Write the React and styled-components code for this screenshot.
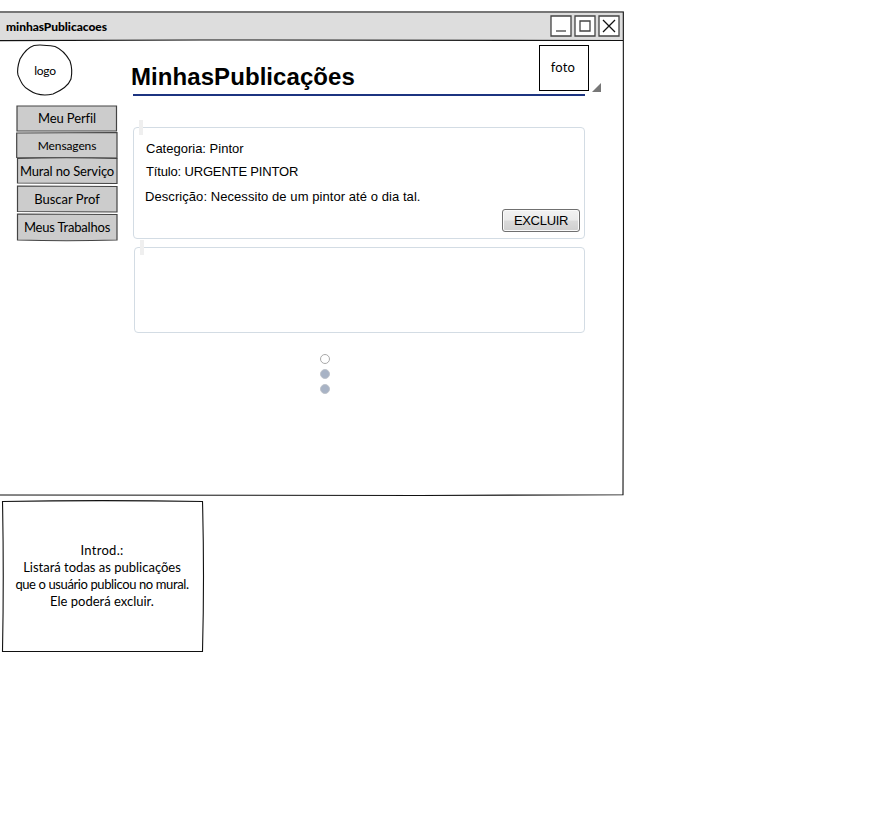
import React from "react";
import styled, { createGlobalStyle } from "styled-components";

const Global = createGlobalStyle`
  * { box-sizing: border-box; }
  body { margin: 0; background: #fff; color: #000; }
`;

const hand = `"Lato", "Open Sans", sans-serif`;
const plain = `"Liberation Sans", Arial, sans-serif`;

const Page = styled.div`
  width: 895px;
  height: 839px;
  padding-top: 11px;
  overflow: hidden;
`;

const Window = styled.main`
  position: relative;
  width: 624px;
  height: 485px;
`;

const Outline = styled.svg`
  position: absolute;
  inset: 0;
  width: 100%;
  height: 100%;
  overflow: visible;
  fill: none;
  stroke: ${(p) => p.$stroke || "#111"};
  stroke-width: ${(p) => p.$weight || 1.1};
  pointer-events: none;
`;

const TitleBar = styled.header`
  display: flex;
  align-items: center;
  justify-content: space-between;
  height: 29px;
  padding: 1px 4px 0 6px;
  background: #ddd;
`;

const Hand = styled.span`
  position: relative;
  display: block;
  font-family: ${hand};
  font-size: ${(p) => p.$size || 13}px;
  font-weight: ${(p) => (p.$bold ? 900 : 400)};
  font-variant-ligatures: none;
  line-height: 17px;
  letter-spacing: ${(p) => p.$track || 0}px;
  white-space: nowrap;
`;

const WindowButtons = styled.div`
  display: flex;
  gap: 2px;
`;

const WindowButton = styled.svg`
  display: block;
  width: 22px;
  height: 22px;
  fill: #fff;
  stroke: #444;
  stroke-width: 1.3;
`;

const Body = styled.div`
  display: grid;
  grid-template-columns: 133px 452px;
  height: 456px;
`;

const Side = styled.aside`
  padding: 4px 0 0 16px;
`;

const Logo = styled.div`
  position: relative;
  display: flex;
  align-items: center;
  justify-content: center;
  width: 56px;
  height: 52px;
  padding: 1px 0 0 2px;
`;

const Menu = styled.nav`
  display: flex;
  flex-direction: column;
  width: 102px;
  padding-top: 9px;
`;

const MenuItem = styled.a`
  position: relative;
  display: flex;
  align-items: center;
  justify-content: center;
  width: 102px;
  height: ${(p) => p.$height}px;
  padding-top: ${(p) => p.$drop || 0}px;
`;

const Main = styled.section`
  display: flex;
  flex-direction: column;
`;

const Heading = styled.div`
  display: flex;
  justify-content: space-between;
  height: 56px;
  padding-top: 5px;
  border-bottom: 2px solid #1c3481;
`;

const Title = styled.h1`
  margin: 18px 0 0 -2px;
  font: bold 24px/28px ${plain};
  letter-spacing: 0.07px;
`;

const Photo = styled.div`
  position: relative;
  display: flex;
  align-items: center;
  justify-content: center;
  width: 50px;
  height: 46px;
  margin-right: -4px;
  padding: 0 2px 1px 0;
  border: 1px solid #000;
`;

const Corner = styled.svg`
  position: absolute;
  left: 52px;
  top: 37px;
  width: 9px;
  height: 9px;
  fill: #777;
`;

const Card = styled.article`
  position: relative;
  height: ${(p) => p.$height}px;
  margin: ${(p) => p.$margin};
  padding: 12px 4px 0 12px;
  border: 1px solid #d3dce4;
  border-radius: 4px;
  font: 13px/18px ${plain};
  &::before {
    content: "";
    position: absolute;
    left: 5px;
    top: -8px;
    width: 4px;
    height: 15px;
    background: #efefef;
  }
`;

const Line = styled.p`
  margin: ${(p) => p.$margin};
  letter-spacing: ${(p) => p.$track || 0}px;
`;

const Delete = styled.button`
  display: block;
  width: 78px;
  height: 23px;
  margin: 3px 0 0 auto;
  padding: 1px 0 0;
  border: 1px solid #707070;
  border-radius: 3px;
  box-shadow: inset 0 0 0 1px #fafafa;
  background: linear-gradient(#f2f2f2 0, #ebebeb 48%, #dadada 52%, #cfcfcf 100%);
  color: #000;
  font: 13px/18px ${plain};
  letter-spacing: -0.3px;
`;

const Dots = styled.div`
  display: flex;
  flex-direction: column;
  gap: 5px;
  margin: 21px 0 0 187px;
`;

const Dot = styled.i`
  width: 10px;
  height: 10px;
  border: 1px solid ${(p) => (p.$empty ? "#aaa" : "#bfc4cb")};
  border-radius: 50%;
  background: ${(p) => (p.$empty ? "#fff" : "#a8b3c5")};
`;

const Note = styled.aside`
  position: relative;
  display: flex;
  flex-direction: column;
  align-items: center;
  width: 202px;
  height: 152px;
  margin: 4px 0 0 2px;
  padding: 42px 2px 0 0;
`;

const menu = [
  { label: "Meu Perfil", height: 27, track: -0.1, d: "M1 1 L100.500 1 L100.500 26 L1 26 Z" },
  { label: "Mensagens", height: 26, drop: 1, size: 12, track: -0.1, d: "M.7 1 L101 .5 L101 26 L.7 25.500 Z" },
  { label: "Mural no Serviço", height: 27, track: -0.15, d: "M1.500 .5 Q50 -1 101 .5 L101 25.500 L1.500 25 Z" },
  { label: "Buscar Prof", height: 28, d: "M1.500 1 L101 1.500 L101 27 L1.500 26.500 Z" },
  { label: "Meus Trabalhos", height: 28, track: -0.2, d: "M1.500 1 L101 1.500 L101 27 Q50 28.500 1.500 27 Z" },
];

export default function App() {
  return (
    <Page>
      <Global />
      <Window>
        <TitleBar>
          <Hand $bold $size={12} $track={-0.05}>minhasPublicacoes</Hand>
          <WindowButtons>
            <WindowButton viewBox="0 0 22 22"><path d="M1 1H21V21H1Z" /><path d="M6 16H16" /></WindowButton>
            <WindowButton viewBox="0 0 22 22"><path d="M1 1H21V21H1Z" /><path d="M6 6H16V16H6Z" /></WindowButton>
            <WindowButton viewBox="0 0 22 22"><path d="M1 1H21V21H1Z" /><path stroke="#111" d="M5 5L17 17M17 5L5 17" /></WindowButton>
          </WindowButtons>
        </TitleBar>
        <Body>
          <Side>
            <Logo>
              <Outline viewBox="0 0 56 52">
                <path d="M18 1.500C24 .2 33 1.500 39 2.500C45 5 50 10 54 17C56 23 56 30 55 35C52 43 44 47 37 50C28 52 20 51 13 46C7 43 5 38 2 31C1 27 2 21 4 15C8 8 13 3 18 1.500Z" />
              </Outline>
              <Hand $size={12} $track={-0.3}>logo</Hand>
            </Logo>
            <Menu>
              {menu.map((m) => (
                <MenuItem key={m.label} $height={m.height} $drop={m.drop}>
                  <Outline $stroke="#444" $weight={1.2}><path fill="#ccc" d={m.d} /></Outline>
                  <Hand $size={m.size} $track={m.track}>{m.label}</Hand>
                </MenuItem>
              ))}
            </Menu>
          </Side>
          <Main>
            <Heading>
              <Title>MinhasPublicações</Title>
              <Photo>
                <Hand $track={0.2}>foto</Hand>
                <Corner viewBox="0 0 9 9"><path d="M9 0V9H0Z" /></Corner>
              </Photo>
            </Heading>
            <Card $height={112} $margin="31px 0 0 0">
              <Line $margin="0">Categoria: Pintor</Line>
              <Line $margin="5px 0 0" $track={-0.16}>Título: URGENTE PINTOR</Line>
              <Line $margin="7px 0 0 -1px" $track={0.065}>Descrição: Necessito de um pintor até o dia tal.</Line>
              <Delete>EXCLUIR</Delete>
            </Card>
            <Card $height={86} $margin="8px 0 0 1px" />
            <Dots><Dot $empty /><Dot /><Dot /></Dots>
          </Main>
        </Body>
        <Outline viewBox="0 0 624 485">
          <path d="M0 1H623.300L623.500 240L623 483.700L420 484.500L0 484M0 29.600L200 29L623 29.500" />
        </Outline>
      </Window>
      <Note>
        <Outline viewBox="0 0 202 152">
          <path d="M.5 1.500Q100 -.2 200.500 1.500Q202.500 75 200.500 151.500H.5Q2 75 .5 1.500Z" />
        </Outline>
        <Hand $track={0.3}>Introd.:</Hand>
        <Hand>Listará todas as publicações</Hand>
        <Hand $track={-0.39}>que o usuário publicou no mural.</Hand>
        <Hand>Ele poderá excluir.</Hand>
      </Note>
    </Page>
  );
}
